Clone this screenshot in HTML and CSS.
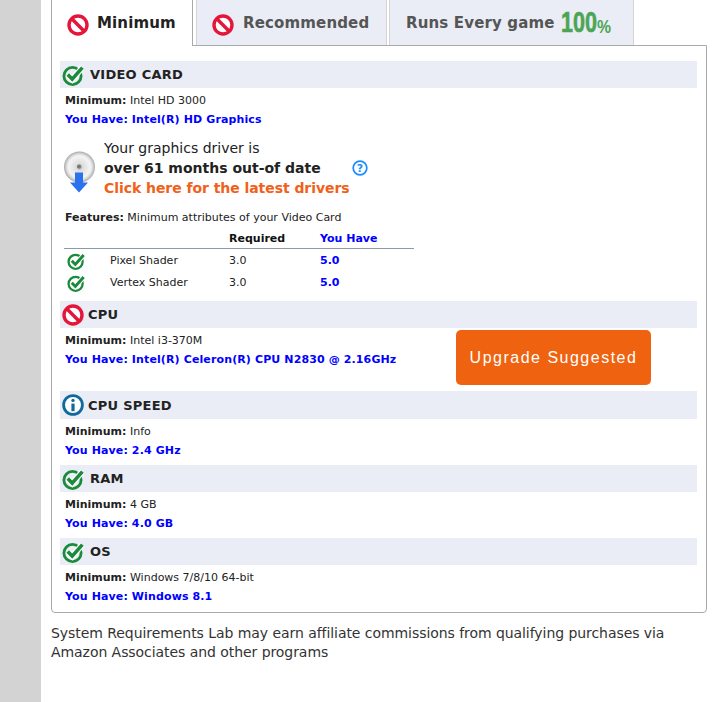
FILE: index.html
```html
<!DOCTYPE html>
<html lang="en">
<head>
<meta charset="utf-8">
<title>System Requirements</title>
<link rel="stylesheet" href="styles.css">
</head>
<body>
<svg class="defs" width="0" height="0" aria-hidden="true">
  <defs>
    <symbol id="no" viewBox="0 0 22 22">
      <circle cx="11" cy="11" r="9" fill="#fff" stroke="#e4163a" stroke-width="3.4"/>
      <path d="M4.8 4.8 17.200 17.200" stroke="#e4163a" stroke-width="3.4"/>
    </symbol>
    <symbol id="ok" viewBox="0 0 22 22">
      <circle cx="10.500" cy="12" r="8.600" fill="none" stroke="#1b8a3a" stroke-width="2.8"/>
      <path d="M5.800 10.600 10.200 15.200 20.400 3.600" fill="none" stroke="#fff" stroke-width="6"/>
      <path d="M5.800 10.600 10.200 15.200 20.400 3.600" fill="none" stroke="#1b8a3a" stroke-width="3.6"/>
    </symbol>
    <symbol id="info" viewBox="0 0 22 22">
      <circle cx="11" cy="11" r="9.400" fill="#fff" stroke="#0f6a9c" stroke-width="2.8"/>
      <circle cx="11" cy="6.400" r="1.700" fill="#0f6a9c"/>
      <path d="M11 9.600v7.600" stroke="#0f6a9c" stroke-width="3.2"/>
    </symbol>
    <radialGradient id="disc" cx="50%" cy="50%" r="50%">
      <stop offset="0" stop-color="#8c8c8c"/>
      <stop offset=".22" stop-color="#dedede"/>
      <stop offset=".7" stop-color="#f4f4f4"/>
      <stop offset=".82" stop-color="#e0e0e0"/>
      <stop offset="1" stop-color="#a9a9a9"/>
    </radialGradient>
  </defs>
</svg>
<div class="shell">
  <div class="side"></div>
  <main class="content">
    <nav class="tabs">
      <div class="tab tab-active"><svg class="ic"><use href="#no"/></svg><span>Minimum</span></div>
      <div class="tab tab-rec"><svg class="ic"><use href="#no"/></svg><span>Recommended</span></div>
      <div class="tab tab-runs"><span>Runs Every game</span>
        <span class="h-num">100</span><span class="h-pct">%</span>
      </div>
    </nav>
    <section class="panel">
      <h2 class="head"><svg class="ic"><use href="#ok"/></svg>VIDEO CARD</h2>
      <p class="row"><b>Minimum:</b> Intel HD 3000</p>
      <p class="row have">You Have: Intel(R) HD Graphics</p>
      <div class="driver">
        <svg class="disc" width="34" height="48" viewBox="0 0 34 48">
          <circle cx="15.500" cy="18" r="15.500" fill="url(#disc)"/>
          <circle cx="15" cy="17.500" r="2" fill="#777"/>
          <path d="M11 23.500h8v10h5L15 43.500 6 33.500h5z" fill="#2b72ee"/>
        </svg>
        <div class="driver-text">
          <div>Your graphics driver is</div>
          <div class="driver-line"><b>over 61 months out-of date</b>
            <svg class="help" width="16" height="16" viewBox="0 0 16 16"><circle cx="8" cy="8" r="6.800" fill="none" stroke="#1a8cff" stroke-width="1.700"/><text x="8" y="12" class="help-q">?</text></svg>
          </div>
          <div class="driver-link">Click here for the latest drivers</div>
        </div>
      </div>
      <p class="row features"><b>Features:</b> Minimum attributes of your Video Card</p>
      <div class="grid grid-head"><span></span><span></span><b>Required</b><b class="blue">You Have</b></div>
      <div class="grid grid-row grid-first"><svg class="ic-s"><use href="#ok"/></svg><span>Pixel Shader</span><span>3.0</span><b class="blue">5.0</b></div>
      <div class="grid grid-row"><svg class="ic-s"><use href="#ok"/></svg><span>Vertex Shader</span><span>3.0</span><b class="blue">5.0</b></div>

      <h2 class="head head-cpu"><svg class="ic"><use href="#no"/></svg>CPU</h2>
      <div class="cpu-body">
        <div>
          <p class="row"><b>Minimum:</b> Intel i3-370M</p>
          <p class="row have">You Have: Intel(R) Celeron(R) CPU N2830 @ 2.16GHz</p>
        </div>
        <div class="upgrade">Upgrade Suggested</div>
      </div>

      <h2 class="head head-speed"><svg class="ic"><use href="#info"/></svg>CPU SPEED</h2>
      <p class="row"><b>Minimum:</b> Info</p>
      <p class="row have">You Have: 2.4 GHz</p>

      <h2 class="head head-next"><svg class="ic"><use href="#ok"/></svg>RAM</h2>
      <p class="row"><b>Minimum:</b> 4 GB</p>
      <p class="row have">You Have: 4.0 GB</p>

      <h2 class="head head-next"><svg class="ic"><use href="#ok"/></svg>OS</h2>
      <p class="row"><b>Minimum:</b> Windows 7/8/10 64-bit</p>
      <p class="row have">You Have: Windows 8.1</p>
    </section>
    <p class="note">System Requirements Lab may earn affiliate commissions from qualifying purchases via Amazon Associates and other programs</p>
  </main>
</div>
</body>
</html>
```
FILE: styles.css
```css
* { box-sizing: border-box; }
html, body { margin: 0; height: 100%; }
body {
  background: #fff;
  color: #222;
  font-family: "DejaVu Sans", Verdana, sans-serif;
  font-size: 11px;
  overflow: hidden;
}
.defs { position: absolute; }
.shell { display: flex; height: 702px; }
.side { width: 41px; background: #d3d3d3; flex: none; }
.content { width: 656px; margin-left: 10px; flex: none; }

.tabs { display: flex; height: 46px; position: relative; z-index: 1; }
.tab {
  display: flex;
  align-items: center;
  height: 45px;
  background: #eaedf5;
  border: 1px solid #d4d4d4;
  border-top: 0;
  border-bottom: 0;
  font-size: 15px;
  letter-spacing: .15px;
  font-weight: bold;
  color: #555;
}
.tab-active {
  width: 142px;
  height: 46px;
  padding: 0 0 1px 15px;
  gap: 8px;
  background: #fff;
  color: #222;
  border: 1px solid #aaa;
  border-top: 0;
  border-bottom: 0;
}
.tab-rec { width: 191px; margin-left: 3px; padding-left: 15px; gap: 9px; }
.tab-runs { width: 245px; margin-left: 2px; padding-left: 16px; }
.ic { width: 22px; height: 22px; flex: none; }
.tab .ic { margin-top: 5px; }
.h-num {
  flex: none;
  width: 36px;
  margin-left: 6px;
  font: bold 29px/29px "Liberation Sans", sans-serif;
  letter-spacing: 0;
  color: #4ca555;
  -webkit-text-stroke: .6px #4ca555;
  transform: scaleX(.744);
  transform-origin: left center;
  white-space: nowrap;
}
.h-pct {
  flex: none;
  width: 14px;
  margin-top: 7px;
  font: bold 19px/19px "Liberation Sans", sans-serif;
  letter-spacing: 0;
  color: #4ca555;
  transform: scaleX(.83);
  transform-origin: left center;
}

.panel {
  border: 1px solid #aaa;
  border-radius: 0 0 4px 4px;
  height: 568px;
  margin-top: -1px;
  padding: 15px 9px 0 8px;
}
.head {
  display: flex;
  align-items: center;
  gap: 6px;
  height: 27px;
  margin: 0 0 4px;
  padding-left: 2px;
  background: #eaedf5;
  font-size: 13px;
  letter-spacing: .25px;
  font-weight: bold;
  color: #222;
}
.head-cpu { margin-top: 7.500px; gap: 4px; }
.head-speed { height: 28px; gap: 4px; }
.head-next { margin-top: 5px; }
.row { margin: 0; padding-left: 5px; line-height: 18.500px; }
.have { color: #00f; font-weight: bold; letter-spacing: .12px; }

.driver { display: flex; margin: 9px 0 0 4px; height: 60px; gap: 6px; }
.disc { flex: none; margin-top: 11px; }
.driver-text { font-size: 14px; line-height: 20px; color: #222; }
.driver-line { display: flex; align-items: center; gap: 31px; }
.driver-link { color: #f0611a; font-weight: bold; letter-spacing: -.06px; }
.help { flex: none; }
.help-q { font: bold 11px "DejaVu Sans", sans-serif; fill: #1a8cff; text-anchor: middle; }
.features { margin-top: 11px; }
.grid {
  display: grid;
  grid-template-columns: 46px 119px 91px 94px;
  align-items: center;
  margin-left: 4px;
  width: 350px;
}
.grid-head { height: 21px; border-bottom: 1px solid #8c9aa8; padding-top: 2px; color: #111; }
.grid-row { height: 22px; }
.grid-first { margin-top: 1px; }
.ic-s { width: 18px; height: 18px; margin-left: 3px; }
.blue { color: #00f; }

.cpu-body { display: flex; justify-content: space-between; height: 59px; padding-right: 46px; }
.upgrade {
  display: flex;
  align-items: center;
  justify-content: center;
  width: 195px;
  height: 55px;
  margin-top: -2px;
  background: #ef620f;
  border-radius: 5px;
  color: #fff;
  font: 16px "Liberation Sans", sans-serif;
  letter-spacing: 1.500px;
}
.note {
  margin: 11px 0 0;
  font-size: 14px;
  line-height: 19px;
  letter-spacing: -.06px;
  color: #333;
}
```
